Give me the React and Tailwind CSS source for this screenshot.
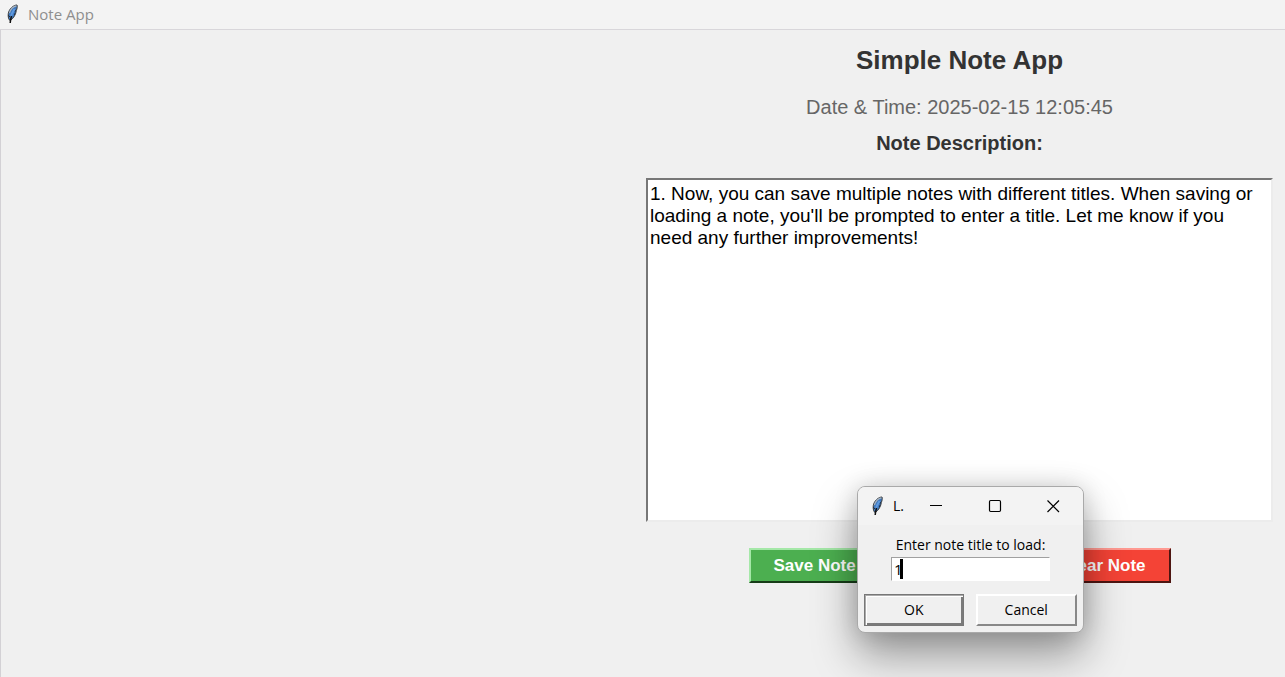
import { useState } from "react";

function Feather() {
  return (
    <svg width="14" height="20" viewBox="0 0 14 20" aria-hidden="true" className="shrink-0">
      <path d="M11 1C7.500 1 3 5 2.300 9.500c-.3 2.200-.1 4.200.8 6.200L4.300 16.500C7.800 14 10 10 10.300 6.500 11.200 4.500 11.500 2.500 11 1Z" fill="#3f78bd" stroke="#3a3a3a" strokeWidth="1" />
      <path d="M10.500 1.800C7.500 2.300 4.600 5.300 3.400 9" fill="none" stroke="#a9b3bd" strokeWidth="1.300" />
      <path d="M8.500 5C6.600 8 5.100 11.500 4.500 13.500" fill="none" stroke="#5f9ae0" strokeWidth="2" />
      <path d="M9.900 6.500 8.800 7.500M9.200 9.500 8 10.500M2.500 11.500 3.600 13" stroke="#10151c" strokeWidth="1" />
      <path d="M5.500 12C5 14 4.400 16 4.200 19" fill="none" stroke="#111" strokeWidth="1.500" />
    </svg>
  );
}

const actionButton =
  "border-2 px-[23px] py-1 text-[17px] leading-6 font-bold whitespace-nowrap text-white h-[35px]";

function NotePanel() {
  const [note, setNote] = useState(
    "1. Now, you can save multiple notes with different titles. When saving or loading a note, you'll be prompted to enter a title. Let me know if you need any further improvements!"
  );
  return (
    <main className="flex w-[627px] flex-col items-center pt-3">
      <h1 className="text-[26px] leading-9 font-bold text-[#333]">Simple Note App</h1>
      <p className="mt-[17px] text-[20px] leading-6 text-[#666]">Date &amp; Time: 2025-02-15 12:05:45</p>
      <label htmlFor="note" className="mt-3 text-[20px] leading-6 font-bold text-[#333]">
        Note Description:
      </label>
      <textarea
        id="note"
        spellCheck={false}
        value={note}
        onChange={(e) => setNote(e.target.value)}
        className="mt-[23px] block h-[344px] w-full resize-none rounded-none border-2 border-t-[#777] border-r-[#ececec] border-b-[#ececec] border-l-[#777] bg-white px-0.5 py-[3px] text-[19px] leading-[22px] text-black outline-none"
      />
      <div className="mt-[26px] flex w-[422px] justify-between">
        <button type="button" className={actionButton + " border-t-[#a5e8a8] border-r-[#1d4d1f] border-b-[#173c18] border-l-[#a5e8a8] bg-[#4caf50]"}>
          Save Note
        </button>
        <button type="button" className={actionButton + " border-t-[#ff9a92] border-r-[#4d1511] border-b-[#4d1511] border-l-[#ff9a92] bg-[#f44336]"}>
          Clear Note
        </button>
      </div>
    </main>
  );
}

function LoadDialog() {
  const [title, setTitle] = useState("1");
  return (
    <section
      role="dialog"
      aria-labelledby="dialog-title"
      className="absolute top-[486px] right-[201px] w-[227px] overflow-hidden rounded-lg border border-[#a9a9a9] bg-[#f0f0f0] font-['Open_Sans',sans-serif] text-[14px] text-black shadow-[0_22px_44px_rgba(0,0,0,0.38),0_0_24px_rgba(0,0,0,0.14)]"
    >
      <header className="flex h-[38px] items-center bg-[#f3f3f3] pl-[13px]">
        <Feather />
        <h2 id="dialog-title" className="ml-2 w-5 pb-px">L.</h2>
        <div className="flex flex-1 justify-between pr-[19px] pl-3">
          <button type="button" aria-label="Minimize" className="p-1">
            <svg width="14" height="14"><path d="M1 6.500h12" stroke="#000" /></svg>
          </button>
          <button type="button" aria-label="Maximize" className="p-1">
            <svg width="14" height="14"><rect x="1.500" y="1.500" width="11" height="11" rx="1.200" fill="none" stroke="#000" strokeWidth="1.200" /></svg>
          </button>
          <button type="button" aria-label="Close" className="p-1">
            <svg width="14" height="14"><path d="m1.500 1.500 11.500 11.500M13 1.500 1.500 13" stroke="#000" strokeWidth="1.200" /></svg>
          </button>
        </div>
      </header>
      <div className="flex flex-col items-center pt-2.5">
        <label htmlFor="title" className="leading-5 whitespace-nowrap">Enter note title to load:</label>
        <div className="relative mt-0.5">
          <input
            id="title"
            type="text"
            value={title}
            onChange={(e) => setTitle(e.target.value)}
            className="block h-6 w-[159px] rounded-none border border-t-[#a0a0a0] border-r-white border-b-white border-l-[#a0a0a0] bg-white px-0.5 pb-px text-[15px] outline-none"
          />
          <span className="absolute top-0.5 left-[9px] h-5 w-[3px] bg-black" />
        </div>
      </div>
      <div className="mt-[13px] flex gap-3 px-1.5 pb-1.5">
        <button type="button" className="h-8 flex-1 border border-[#777] pb-px shadow-[inset_1px_1px_0_#aaa,inset_2px_2px_0_#fff,inset_-2px_-2px_0_#7a7a7a]">
          OK
        </button>
        <button type="button" className="h-8 flex-1 border-2 border-t-white border-r-[#888] border-b-[#888] border-l-white pb-px">
          Cancel
        </button>
      </div>
    </section>
  );
}

export default function App() {
  return (
    <div className="relative flex h-screen flex-col overflow-hidden bg-[#f0f0f0] font-['Liberation_Sans',sans-serif]">
      <header className="flex h-[30px] items-center border-b border-[#d8d6da] bg-[#f3f3f3] pb-px pl-1.5 font-['Open_Sans',sans-serif] text-[15px] text-[#8e8e8e]">
        <Feather />
        <span className="ml-2">Note App</span>
      </header>
      <div className="flex flex-1 justify-end border-l border-[#d3d1d5] pr-3">
        <NotePanel />
      </div>
      <LoadDialog />
    </div>
  );
}
